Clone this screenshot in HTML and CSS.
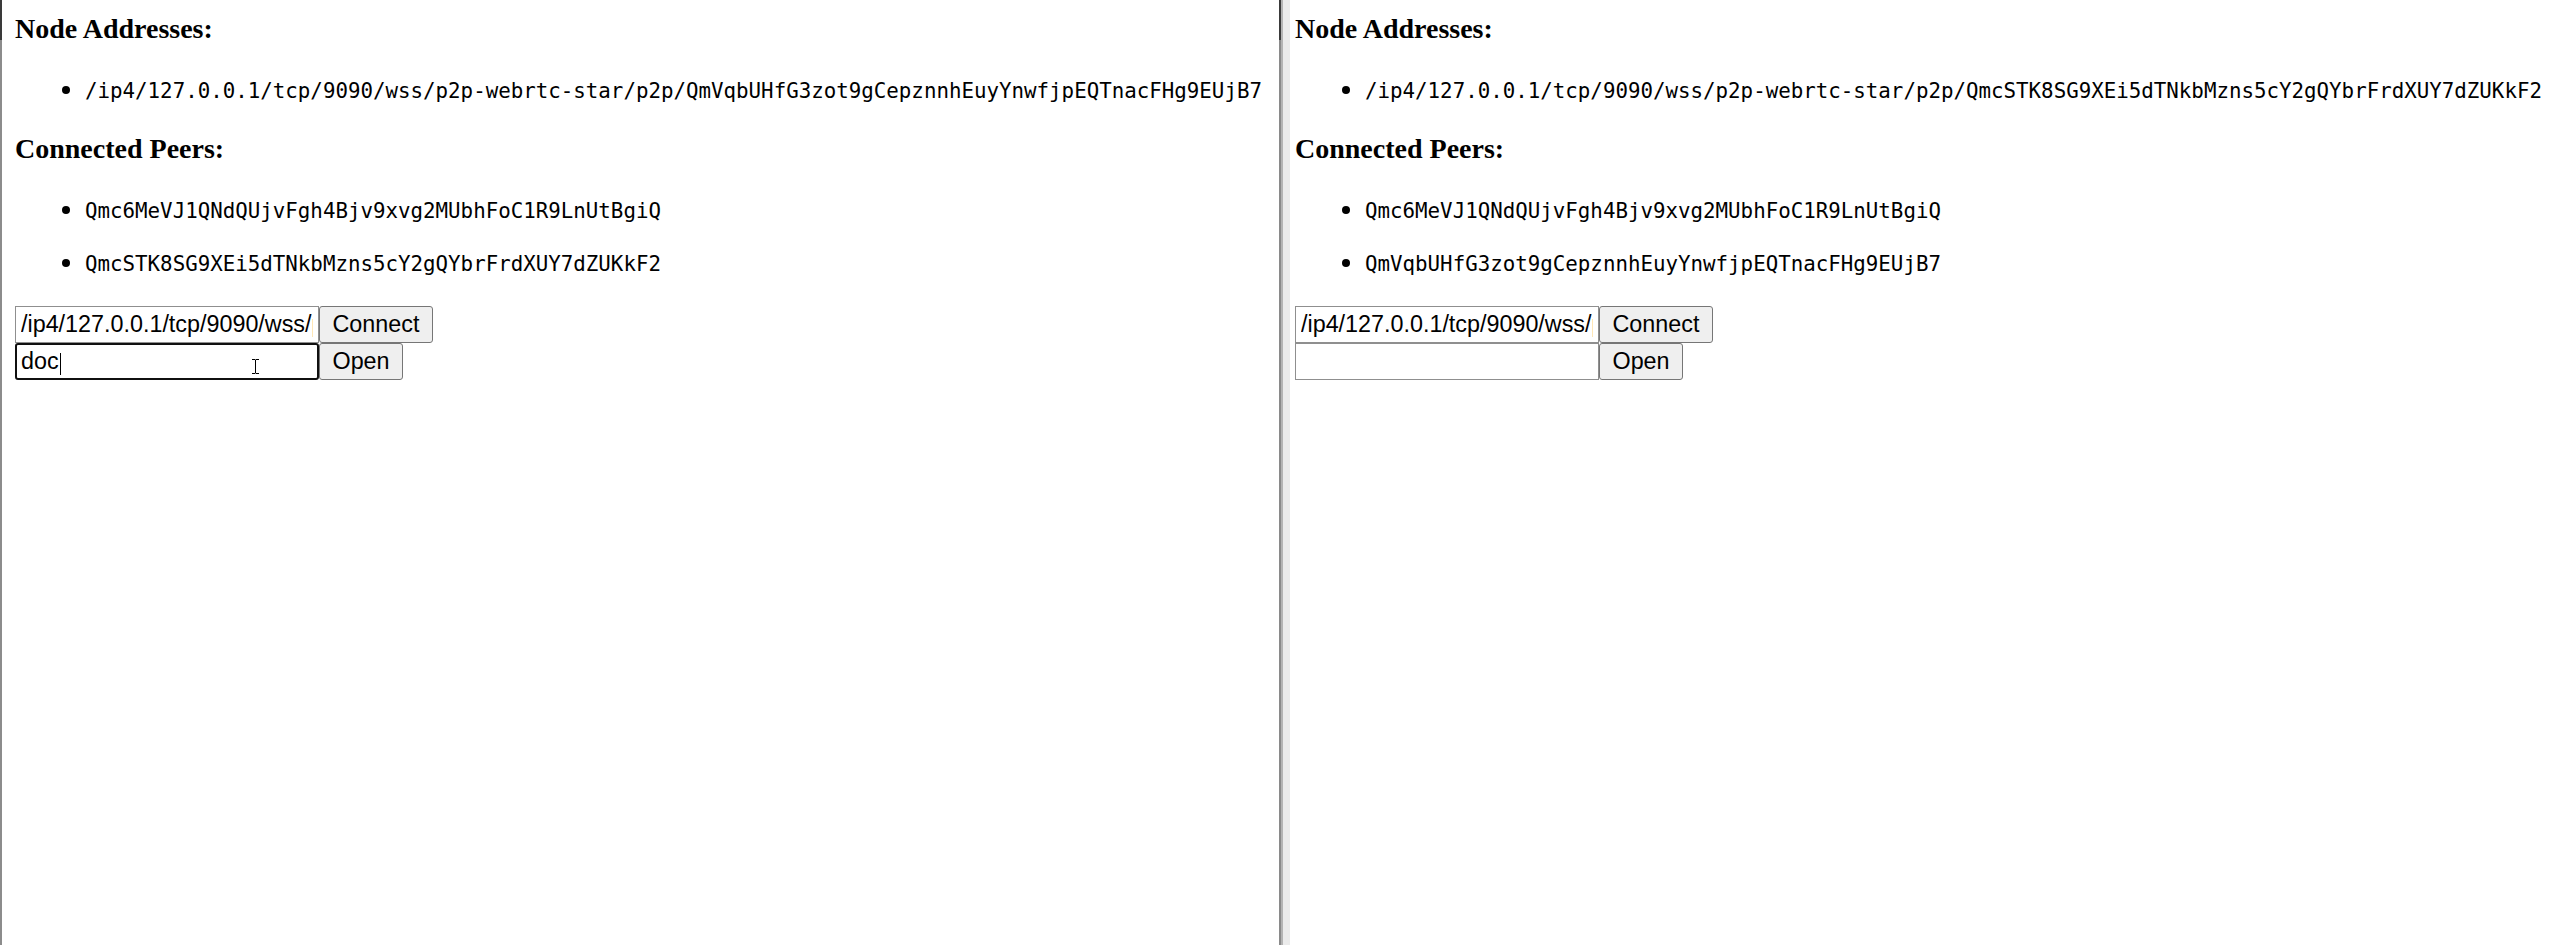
FILE: index.html
```html
<!DOCTYPE html>
<html>
<head>
<meta charset="utf-8">
<title>p2p</title>
<link rel="stylesheet" href="styles.css">
</head>
<body>
<div class="screen">
  <section class="pane pane-left">
    <h4 class="title">Node Addresses:</h4>
    <ul class="list">
      <li><span class="mono">/ip4/127.0.0.1/tcp/9090/wss/p2p-webrtc-star/p2p/QmVqbUHfG3zot9gCepznnhEuyYnwfjpEQTnacFHg9EUjB7</span></li>
    </ul>
    <h4 class="title">Connected Peers:</h4>
    <ul class="list">
      <li><span class="mono">Qmc6MeVJ1QNdQUjvFgh4Bjv9xvg2MUbhFoC1R9LnUtBgiQ</span></li>
      <li><span class="mono">QmcSTK8SG9XEi5dTNkbMzns5cY2gQYbrFrdXUY7dZUKkF2</span></li>
    </ul>
    <div class="row">
      <input class="field" type="text" value="/ip4/127.0.0.1/tcp/9090/wss/p2p-webrtc-star"><button class="btn">Connect</button>
    </div>
    <div class="row">
      <span class="field-wrap"><input class="field focused" type="text" value="doc"><span class="caret"></span><svg class="ibeam" width="9" height="17" viewBox="0 0 9 17"><path d="M1 1.5h3M5 1.5h3M4.5 1.5v14M1 15.5h3M5 15.5h3" stroke="#fff" stroke-width="2.4" fill="none"/><path d="M1 1.5h3M5 1.5h3M4.5 1.5v14M1 15.5h3M5 15.5h3" stroke="#000" stroke-width="1" fill="none"/></svg></span><button class="btn">Open</button>
    </div>
  </section>
  <section class="pane pane-right">
    <h4 class="title">Node Addresses:</h4>
    <ul class="list">
      <li><span class="mono">/ip4/127.0.0.1/tcp/9090/wss/p2p-webrtc-star/p2p/QmcSTK8SG9XEi5dTNkbMzns5cY2gQYbrFrdXUY7dZUKkF2</span></li>
    </ul>
    <h4 class="title">Connected Peers:</h4>
    <ul class="list">
      <li><span class="mono">Qmc6MeVJ1QNdQUjvFgh4Bjv9xvg2MUbhFoC1R9LnUtBgiQ</span></li>
      <li><span class="mono">QmVqbUHfG3zot9gCepznnhEuyYnwfjpEQTnacFHg9EUjB7</span></li>
    </ul>
    <div class="row">
      <input class="field" type="text" value="/ip4/127.0.0.1/tcp/9090/wss/p2p-webrtc-star"><button class="btn">Connect</button>
    </div>
    <div class="row">
      <input class="field" type="text" value=""><button class="btn">Open</button>
    </div>
  </section>
</div>
</body>
</html>
```
FILE: styles.css
```css
html, body {
  margin: 0;
  padding: 0;
  background: #ffffff;
}

.screen {
  display: flex;
  width: 2558px;
  height: 945px;
  overflow: hidden;
}

.pane {
  position: relative;
  box-sizing: border-box;
  flex: 0 0 auto;
  height: 945px;
  padding-top: 13px;
  color: #000;
}

.pane-left {
  width: 1279px;
  padding-left: 15px;
  background:
    linear-gradient(#3a3a3a, #3a3a3a) 0 0 / 2px 40px no-repeat,
    linear-gradient(#8c8c8c, #8c8c8c) 0 0 / 2px 100% no-repeat,
    #ffffff;
}

.pane-right {
  width: 1279px;
  padding-left: 16px;
  background:
    linear-gradient(#3a3a3a, #3a3a3a) 0 0 / 2px 40px no-repeat,
    linear-gradient(#8a8a8a, #8a8a8a) 0 0 / 2px 100% no-repeat,
    linear-gradient(#b4b4b4, #b4b4b4) 2px 0 / 2px 100% no-repeat,
    linear-gradient(#ebebeb, #ebebeb) 4px 0 / 7px 100% no-repeat,
    #ffffff;
}

.title {
  margin: 0;
  font: bold 28px/32px "Liberation Serif", "Times New Roman", serif;
}

.list {
  margin: 28px 0;
  padding-left: 70px;
  list-style: disc;
  font: 28px/32px "Liberation Serif", "Times New Roman", serif;
}

.list li + li {
  margin-top: 21px;
}

.mono {
  font-family: "DejaVu Sans Mono", "Liberation Mono", monospace;
  font-size: 20.8px;
  line-height: 1;
}

.row {
  display: flex;
  align-items: stretch;
  height: 37px;
}

.field-wrap {
  position: relative;
  display: flex;
}

.field {
  box-sizing: border-box;
  width: 304px;
  height: 37px;
  margin: 0;
  padding: 0 5px;
  border: 1px solid #8f8f8f;
  border-radius: 0;
  background: #fff;
  color: #000;
  font: 23.33px "Liberation Sans", Arial, sans-serif;
  outline: none;
}

.field.focused {
  border: 2px solid #101010;
  border-radius: 3px;
  padding-left: 4px;
}

.caret {
  position: absolute;
  left: 45px;
  top: 10px;
  width: 1px;
  height: 22px;
  background: #000;
}

.ibeam {
  position: absolute;
  left: 236px;
  top: 15px;
}

.btn {
  box-sizing: border-box;
  height: 37px;
  margin: 0;
  padding: 0 12.5px;
  border: 1px solid #767676;
  border-radius: 3px;
  background: #efefef;
  color: #000;
  font: 23.33px "Liberation Sans", Arial, sans-serif;
}
```
